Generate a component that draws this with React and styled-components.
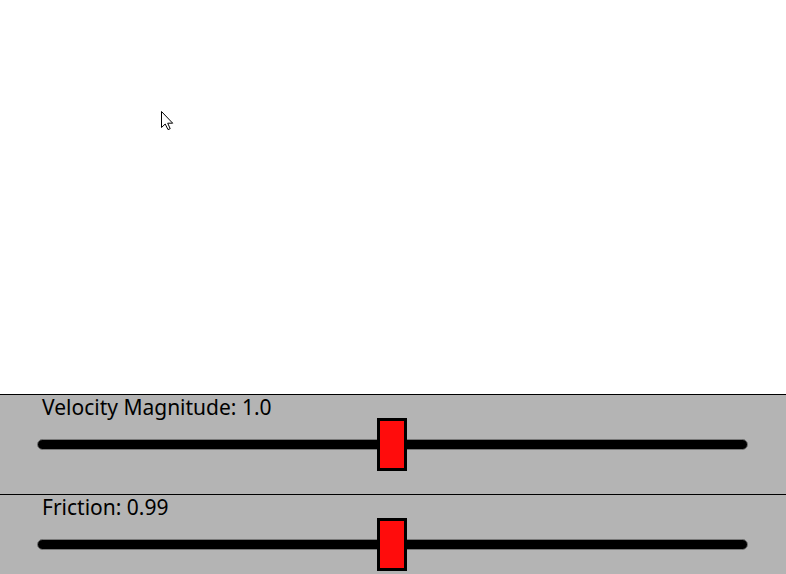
import React, { useState } from "react";
import styled, { createGlobalStyle } from "styled-components";

const GlobalStyle = createGlobalStyle`
  * { box-sizing: border-box; }
  body {
    margin: 0;
    background: #fff;
    color: #000;
    font-family: "Noto Sans", "Open Sans", sans-serif;
    overflow: hidden;
  }
`;

const Page = styled.main`
  display: flex;
  flex-direction: column;
  min-height: 100vh;
`;

const Stage = styled.section`
  position: relative;
  flex: 1;
  background: #fff;
`;

const Pointer = styled.svg`
  position: absolute;
  left: 161px;
  top: 111px;
  width: 13px;
  height: 20px;
`;

const Panel = styled.section`
  display: flex;
  flex-direction: column;
  min-height: ${(p) => p.$height}px;
  padding: 2px 38px 0 37px;
  border-top: 1px solid #000;
  background: #b4b4b4;
`;

const Label = styled.label`
  padding-left: 5px;
  font-size: 21px;
  line-height: 21px;
  white-space: nowrap;
`;

const Slider = styled.input`
  appearance: none;
  display: block;
  width: 100%;
  height: 53px;
  margin: 0;
  background: transparent;
  cursor: pointer;

  &::-webkit-slider-runnable-track {
    height: 11px;
    border: 1px solid #787878;
    border-radius: 6px;
    background: #000;
  }

  &::-webkit-slider-thumb {
    appearance: none;
    width: 30px;
    height: 53px;
    margin-top: -22px;
    border: 3px solid #000;
    border-radius: 0;
    background: #ff0c0c;
  }
`;

function Control({ id, name, min, max, initial, digits, height }) {
  const [value, setValue] = useState(initial);
  return (
    <Panel $height={height}>
      <Label htmlFor={id}>
        {name}: {value.toFixed(digits)}
      </Label>
      <Slider
        id={id}
        type="range"
        min={min}
        max={max}
        step="any"
        value={value}
        onChange={(e) => setValue(Number(e.target.value))}
      />
    </Panel>
  );
}

export default function App() {
  return (
    <>
      <GlobalStyle />
      <Page>
        <Stage>
          <Pointer viewBox="0 0 13 20" aria-hidden="true">
            <path
              d="M.5.5v16l3.7-3.5 2.8 5.6 2.2-.9-2.5-5.5h5z"
              fill="#fff"
              stroke="#000"
              strokeWidth="1"
            />
          </Pointer>
        </Stage>
        <Control id="velocity" name="Velocity Magnitude" min={0} max={2} initial={0.998} digits={1} height={100} />
        <Control id="friction" name="Friction" min={0.98} max={1} initial={0.98998} digits={2} height={80} />
      </Page>
    </>
  );
}
